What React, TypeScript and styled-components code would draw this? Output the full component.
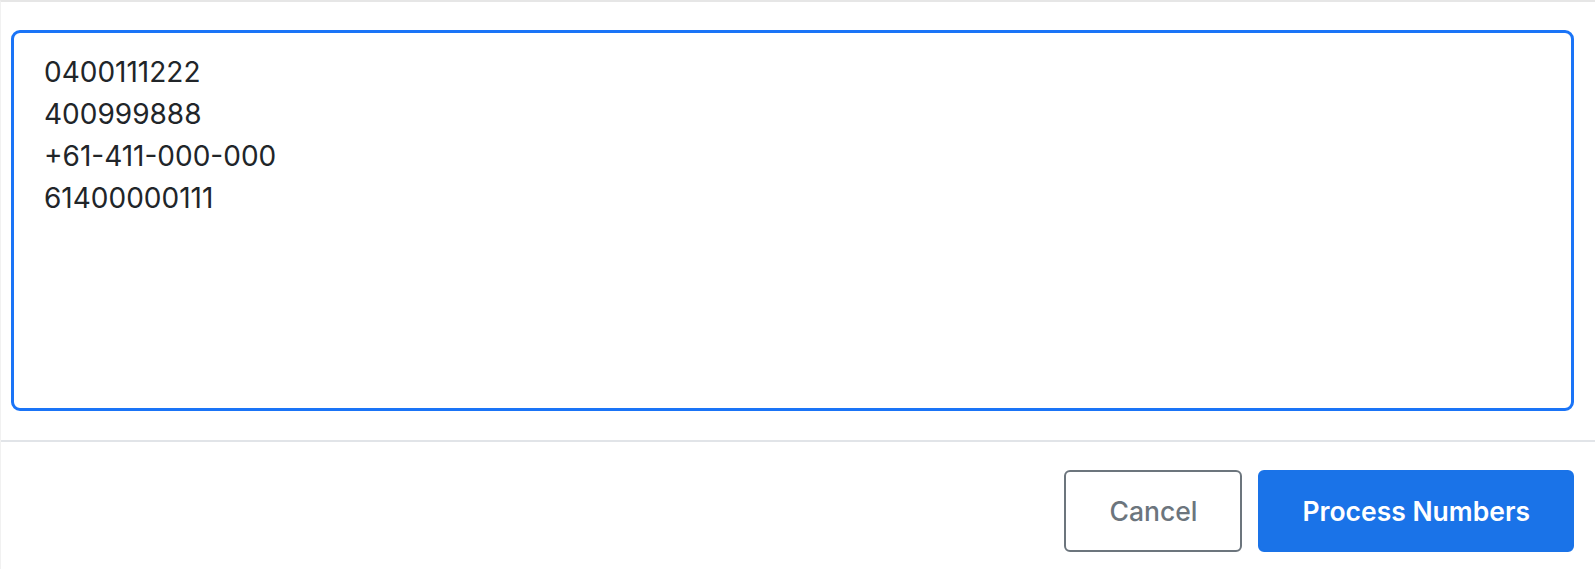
import styled, { createGlobalStyle } from "styled-components";

const GlobalStyle = createGlobalStyle`
    * {
        box-sizing: border-box;
    }
    html, body {
        margin: 0;
        padding: 0;
        background: #ffffff;
        font-family: Inter, "Liberation Sans", sans-serif;
    }
`;

const numbers = ["0400111222", "400999888", "+61-411-000-000", "61400000111"];

export default function App() {
    return (
        <>
            <GlobalStyle />
            <Modal>
                <Body>
                    <NumbersInput defaultValue={numbers.join("\n")} spellCheck={false} />
                </Body>
                <Footer>
                    <CancelButton>Cancel</CancelButton>
                    <PrimaryButton>Process Numbers</PrimaryButton>
                </Footer>
            </Modal>
        </>
    );
}

const Modal = styled.div`
    display: flex;
    flex-direction: column;
    height: 569px;
    border-top: 2px solid #e6e6e6;
    border-left: 1px solid #f1f1f1;
    background: #ffffff;
`;

const Body = styled.div`
    padding: 28px 21px 29px 10px;
    border-bottom: 2px solid #e1e4e8;
`;

const NumbersInput = styled.textarea`
    display: block;
    width: 100%;
    height: 381px;
    resize: none;
    border: 3px solid #1a74f7;
    border-radius: 9px;
    padding: 18px 30px;
    font-family: Inter, "Liberation Sans", sans-serif;
    font-size: 28px;
    line-height: 42px;
    color: #212529;
    background: #ffffff;
    outline: none;
`;

const Footer = styled.div`
    display: flex;
    justify-content: flex-end;
    gap: 16px;
    padding: 28px 21px 0 0;
`;

const BaseButton = styled.button`
    height: 82px;
    padding: 0 42px;
    border-radius: 6px;
    font-family: Inter, "Liberation Sans", sans-serif;
    font-size: 26.5px;
    cursor: pointer;
`;

const CancelButton = styled(BaseButton)`
    background: #ffffff;
    border: 2px solid #6c757d;
    color: #6c757d;
    font-weight: 500;
    padding: 0 43px;
`;

const PrimaryButton = styled(BaseButton)`
    background: #1a73e8;
    border: 2px solid #1a73e8;
    color: #ffffff;
    font-weight: 600;
`;
